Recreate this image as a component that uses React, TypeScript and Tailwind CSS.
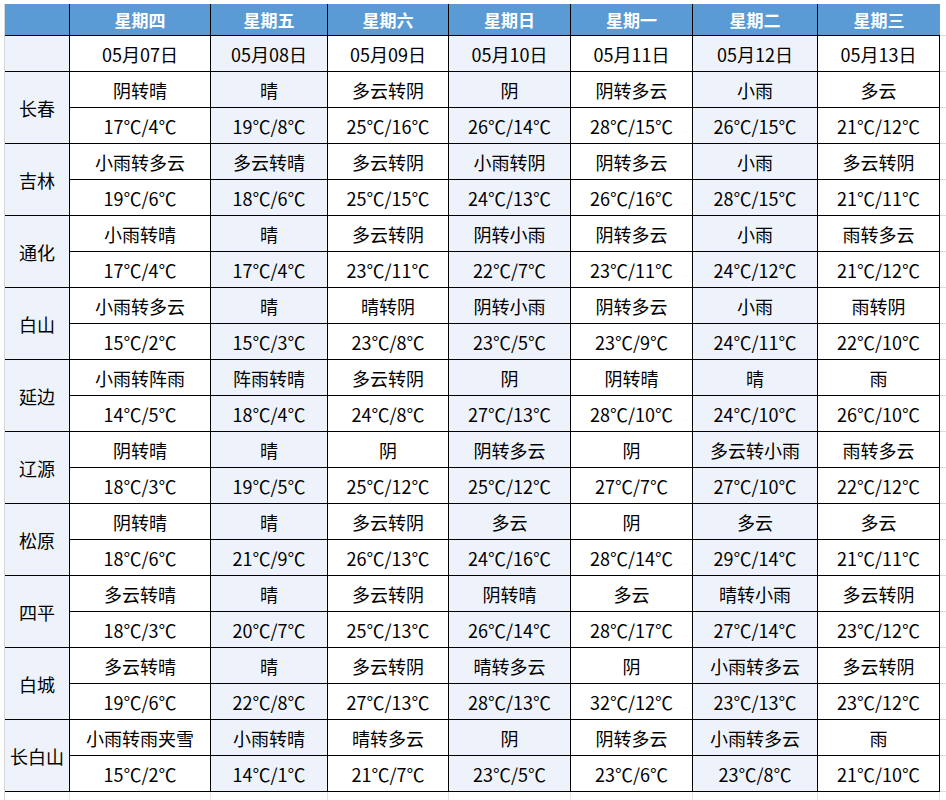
import React from "react";

const days = ["星期四", "星期五", "星期六", "星期日", "星期一", "星期二", "星期三"];
const dates = ["05月07日", "05月08日", "05月09日", "05月10日", "05月11日", "05月12日", "05月13日"];

const cities: { name: string; w: string[]; t: string[] }[] = [
  { name: "长春", w: ["阴转晴", "晴", "多云转阴", "阴", "阴转多云", "小雨", "多云"], t: ["17℃/4℃", "19℃/8℃", "25℃/16℃", "26℃/14℃", "28℃/15℃", "26℃/15℃", "21℃/12℃"] },
  { name: "吉林", w: ["小雨转多云", "多云转晴", "多云转阴", "小雨转阴", "阴转多云", "小雨", "多云转阴"], t: ["19℃/6℃", "18℃/6℃", "25℃/15℃", "24℃/13℃", "26℃/16℃", "28℃/15℃", "21℃/11℃"] },
  { name: "通化", w: ["小雨转晴", "晴", "多云转阴", "阴转小雨", "阴转多云", "小雨", "雨转多云"], t: ["17℃/4℃", "17℃/4℃", "23℃/11℃", "22℃/7℃", "23℃/11℃", "24℃/12℃", "21℃/12℃"] },
  { name: "白山", w: ["小雨转多云", "晴", "晴转阴", "阴转小雨", "阴转多云", "小雨", "雨转阴"], t: ["15℃/2℃", "15℃/3℃", "23℃/8℃", "23℃/5℃", "23℃/9℃", "24℃/11℃", "22℃/10℃"] },
  { name: "延边", w: ["小雨转阵雨", "阵雨转晴", "多云转阴", "阴", "阴转晴", "晴", "雨"], t: ["14℃/5℃", "18℃/4℃", "24℃/8℃", "27℃/13℃", "28℃/10℃", "24℃/10℃", "26℃/10℃"] },
  { name: "辽源", w: ["阴转晴", "晴", "阴", "阴转多云", "阴", "多云转小雨", "雨转多云"], t: ["18℃/3℃", "19℃/5℃", "25℃/12℃", "25℃/12℃", "27℃/7℃", "27℃/10℃", "22℃/12℃"] },
  { name: "松原", w: ["阴转晴", "晴", "多云转阴", "多云", "阴", "多云", "多云"], t: ["18℃/6℃", "21℃/9℃", "26℃/13℃", "24℃/16℃", "28℃/14℃", "29℃/14℃", "21℃/11℃"] },
  { name: "四平", w: ["多云转晴", "晴", "多云转阴", "阴转晴", "多云", "晴转小雨", "多云转阴"], t: ["18℃/3℃", "20℃/7℃", "25℃/13℃", "26℃/14℃", "28℃/17℃", "27℃/14℃", "23℃/12℃"] },
  { name: "白城", w: ["多云转晴", "晴", "多云转阴", "晴转多云", "阴", "小雨转多云", "多云转阴"], t: ["19℃/6℃", "22℃/8℃", "27℃/13℃", "28℃/13℃", "32℃/12℃", "23℃/13℃", "23℃/12℃"] },
  { name: "长白山", w: ["小雨转雨夹雪", "小雨转晴", "晴转多云", "阴", "阴转多云", "小雨转多云", "雨"], t: ["15℃/2℃", "14℃/1℃", "21℃/7℃", "23℃/5℃", "23℃/6℃", "23℃/8℃", "21℃/10℃"] },
];

const bgFor = (j: number) => (j % 2 === 1 ? "bg-[#eef3fb]" : "bg-white");

function Cell({ text, j }: { text: string; j: number }) {
  return (
    <div className={`h-[36px] flex items-center justify-center border-r border-b border-black whitespace-nowrap ${bgFor(j)}`}>
      {text}
    </div>
  );
}

function Ext() {
  return <div className="h-[36px] border-b border-[#dcdcdc]" />;
}

export default function App() {
  return (
    <div className="w-[946px] h-[800px] bg-white overflow-hidden pl-[4px] pt-[4px] text-black" style={{ fontFamily: '"Noto Sans CJK SC", "Noto Sans", sans-serif' }}>
      <div className="border-l border-[#d6d6d6] h-[796px]">
        <div className="grid grid-cols-[65px_141px_117px_121px_122px_122px_125px_122px_6px] text-[18px] leading-none">
          {/* header */}
          <div className="h-[32px] bg-[#5b9bd5] border-r border-b border-black" />
          {days.map((d, j) => (
            <div
              key={d}
              className={`h-[32px] bg-[#5b9bd5] border-b border-black flex items-center justify-center text-white font-bold text-[17px] ${j < 6 ? "border-r" : ""}`}
            >
              {d}
            </div>
          ))}
          <div className="h-[32px] border-b border-[#dcdcdc]" />
          {/* dates */}
          <div className="h-[36px] bg-[#eef3fb] border-r border-b border-black" />
          {dates.map((d, j) => (
            <Cell key={d} text={d} j={j} />
          ))}
          <Ext />
          {cities.map((c) => (
            <React.Fragment key={c.name}>
              <div className="row-span-2 bg-[#eef3fb] border-r border-b border-black flex items-center justify-center whitespace-nowrap">
                {c.name}
              </div>
              {c.w.map((w, j) => (
                <Cell key={"w" + j} text={w} j={j} />
              ))}
              <Ext />
              {c.t.map((t, j) => (
                <Cell key={"t" + j} text={t} j={j} />
              ))}
              <Ext />
            </React.Fragment>
          ))}
          {Array.from({ length: 8 }).map((_, i) => (
            <div key={"b" + i} className="h-[8px] border-r border-[#e2e2e2]" />
          ))}
          <div className="h-[8px]" />
        </div>
      </div>
    </div>
  );
}
